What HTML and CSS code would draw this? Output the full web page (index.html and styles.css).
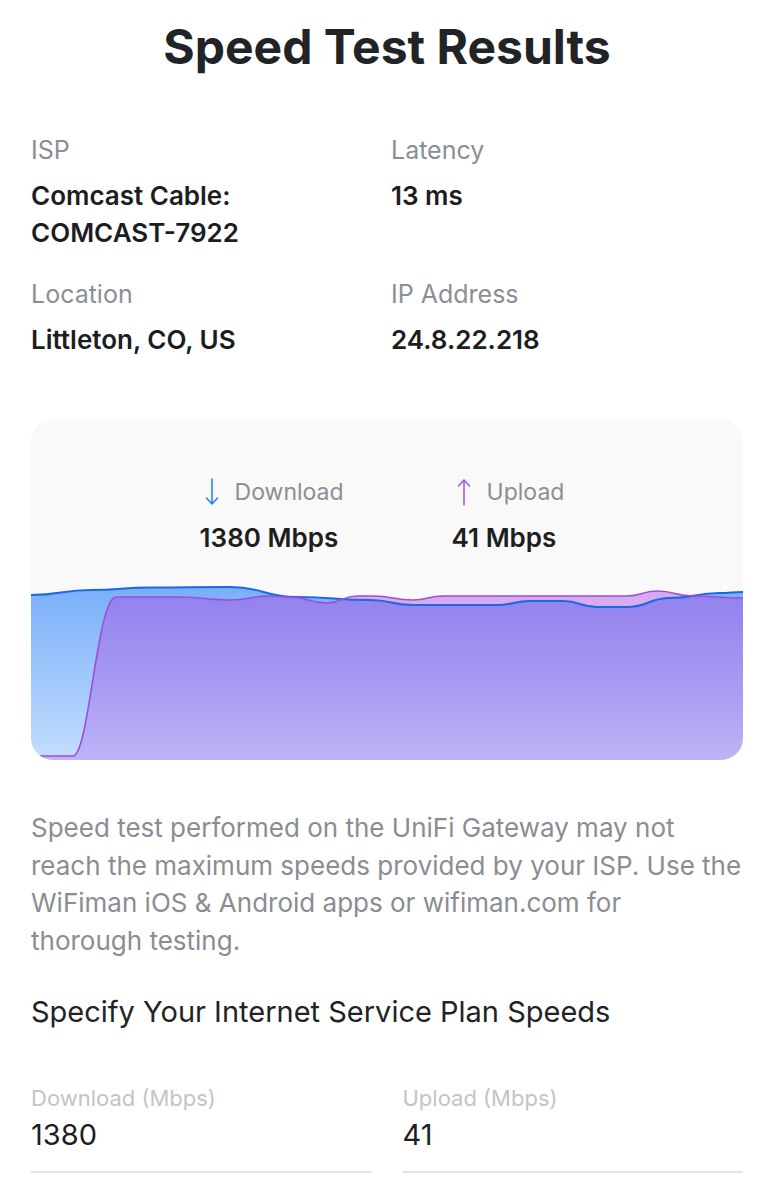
FILE: index.html
```html
<!DOCTYPE html>
<html lang="en">
<head>
    <meta charset="UTF-8">
    <meta name="viewport" content="width=device-width, initial-scale=1.0">
    <title>Speed Test Results</title>
    <link rel="stylesheet" href="styles.css">
</head>
<body>
    <div class="page">
        <h1 class="page-title">Speed Test Results</h1>

        <div class="info-grid">
            <div class="info-item">
                <div class="info-label">ISP</div>
                <div class="info-value">Comcast Cable:<br>COMCAST-7922</div>
            </div>
            <div class="info-item">
                <div class="info-label">Latency</div>
                <div class="info-value">13 ms</div>
            </div>
            <div class="info-item">
                <div class="info-label">Location</div>
                <div class="info-value">Littleton, CO, US</div>
            </div>
            <div class="info-item">
                <div class="info-label">IP Address</div>
                <div class="info-value">24.8.22.218</div>
            </div>
        </div>

        <div class="result-card">
            <div class="speed-stats">
                <div class="speed-stat">
                    <div class="speed-label">
                        <svg class="speed-arrow download" width="14" height="28" viewBox="0 0 14 28">
                            <path d="M7 1 V26 M1.5 20 L7 26 L12.5 20" fill="none" stroke="currentColor" stroke-width="1.6" stroke-linecap="round" stroke-linejoin="round"/>
                        </svg>
                        <span>Download</span>
                    </div>
                    <div class="speed-value">1380 Mbps</div>
                </div>
                <div class="speed-stat">
                    <div class="speed-label">
                        <svg class="speed-arrow upload" width="14" height="28" viewBox="0 0 14 28">
                            <path d="M7 27 V2 M1.5 8 L7 2 L12.5 8" fill="none" stroke="currentColor" stroke-width="1.6" stroke-linecap="round" stroke-linejoin="round"/>
                        </svg>
                        <span>Upload</span>
                    </div>
                    <div class="speed-value">41 Mbps</div>
                </div>
            </div>

            <svg class="speed-chart" viewBox="0 0 712 175" preserveAspectRatio="none">
                <defs>
                    <linearGradient id="downFill" x1="0" y1="0" x2="0" y2="1">
                        <stop offset="0" stop-color="#79aff9"/>
                        <stop offset="1" stop-color="#c4defe"/>
                    </linearGradient>
                    <linearGradient id="upFill" x1="0" y1="0" x2="0" y2="1">
                        <stop offset="0" stop-color="#af47e1" stop-opacity="0.45"/>
                        <stop offset="1" stop-color="#af47e1" stop-opacity="0.28"/>
                    </linearGradient>
                </defs>
                <!-- download -->
                <path fill="url(#downFill)" d="M0,10 C30,10 30,5 60,5 C90,5 90,2.5 120,2.5 C160,2.5 160,2 199,2 C232.5,2 232.5,12 266,12 C302.5,12 302.5,15 339,15 C360.5,15 360.5,20 382,20 C424,20 424,20 466,20 C482.5,20 482.5,16 499,16 C515.5,16 515.5,16 532,16 C549,16 549,22 566,22 C581,22 581,22 596,22 C617.5,22 617.5,13 639,13 C664,13 664,8 689,8 C700.5,8 700.5,7 712,7 L712,175 L0,175 Z"/>
                <!-- upload -->
                <path fill="url(#upFill)" d="M0,171 L42,171 C58,171 66,12 85,12 C117,12 117,12 149,12 C174,12 174,15 199,15 C219,15 219,11 239,11 C249,11 249,12 259,12 C277.5,12 277.5,18 296,18 C311,18 311,11 326,11 C334,11 334,11 342,11 C362,11 362,15 382,15 C397,15 397,11 412,11 C504,11 504,11 596,11 C611,11 611,6 626,6 C644,6 644,11 662,11 C687,11 687,13 712,13 L712,175 L0,175 Z"/>
                <path class="line-down" d="M0,10 C30,10 30,5 60,5 C90,5 90,2.5 120,2.5 C160,2.5 160,2 199,2 C232.5,2 232.5,12 266,12 C302.5,12 302.5,15 339,15 C360.5,15 360.5,20 382,20 C424,20 424,20 466,20 C482.5,20 482.5,16 499,16 C515.5,16 515.5,16 532,16 C549,16 549,22 566,22 C581,22 581,22 596,22 C617.5,22 617.5,13 639,13 C664,13 664,8 689,8 C700.5,8 700.5,7 712,7"/>
                <path class="line-up" d="M0,171 L42,171 C58,171 66,12 85,12 C117,12 117,12 149,12 C174,12 174,15 199,15 C219,15 219,11 239,11 C249,11 249,12 259,12 C277.5,12 277.5,18 296,18 C311,18 311,11 326,11 C334,11 334,11 342,11 C362,11 362,15 382,15 C397,15 397,11 412,11 C504,11 504,11 596,11 C611,11 611,6 626,6 C644,6 644,11 662,11 C687,11 687,13 712,13"/>
            </svg>
        </div>

        <p class="disclaimer">Speed test performed on the UniFi Gateway may not reach the maximum speeds provided by your ISP. Use the WiFiman iOS &amp; Android apps or wifiman.com for thorough&nbsp;testing.</p>

        <h2 class="section-title">Specify Your Internet Service Plan Speeds</h2>

        <div class="plan-grid">
            <div class="plan-field">
                <label for="plan-down">Download (Mbps)</label>
                <input type="text" id="plan-down" value="1380">
            </div>
            <div class="plan-field">
                <label for="plan-up">Upload (Mbps)</label>
                <input type="text" id="plan-up" value="41">
            </div>
        </div>
    </div>
</body>
</html>
```

FILE: styles.css
```css
* {
    box-sizing: border-box;
    font-family: 'Inter', 'Noto Sans', sans-serif;
}

body {
    margin: 0;
    padding: 0;
    background: white;
    color: #1d1e21;
}

.page {
    padding: 17px 31px 0;
}

.page-title {
    margin: 0;
    text-align: center;
    font-size: 48px;
    line-height: 60px;
    font-weight: 700;
    color: #222326;
}

.info-grid {
    display: grid;
    grid-template-columns: 360px 1fr;
    row-gap: 25px;
    margin-top: 55px;
}

.info-label {
    font-size: 25px;
    line-height: 36px;
    color: #8b8f95;
}

.info-value {
    margin-top: 9px;
    font-size: 26px;
    line-height: 37px;
    font-weight: 600;
    color: #1c1d1f;
}

.result-card {
    margin-top: 61px;
    background: #f9f9fa;
    border-radius: 22px;
    overflow: hidden;
    padding-top: 58px;
}

.speed-stats {
    display: flex;
    justify-content: center;
    gap: 108px;
    margin-bottom: 32px;
    padding-right: 10px;
}

.speed-label {
    display: flex;
    align-items: center;
    gap: 16px;
    height: 30px;
    padding-left: 5px;
    font-size: 23px;
    color: #8b8e94;
}

.speed-arrow.download {
    color: #2f80ef;
}

.speed-arrow.upload {
    color: #a45ae2;
}

.speed-value {
    margin-top: 16px;
    font-size: 26px;
    line-height: 30px;
    font-weight: 600;
    color: #1d1e20;
}

.speed-chart {
    display: block;
    width: 100%;
    height: 175px;
}

.line-down {
    fill: none;
    stroke: #1a68e2;
    stroke-width: 2;
}

.line-up {
    fill: none;
    stroke: #9a4fdc;
    stroke-width: 1.6;
}

.disclaimer {
    margin: 49px 0 0;
    font-size: 26px;
    line-height: 37.5px;
    color: #8a8d93;
}

.section-title {
    margin: 33px 0 0;
    font-size: 29px;
    line-height: 40px;
    font-weight: 400;
    color: #222326;
}

.plan-grid {
    display: grid;
    grid-template-columns: 1fr 1fr;
    column-gap: 31px;
    margin-top: 51px;
}

.plan-field label {
    display: block;
    font-size: 22px;
    line-height: 30px;
    color: #c2c4c8;
}

.plan-field input {
    display: block;
    width: 100%;
    margin-top: 4px;
    padding: 0 0 18px;
    border: none;
    border-bottom: 2px solid #e3e4e6;
    background: none;
    font-size: 29px;
    line-height: 36px;
    color: #1d1e21;
    outline: none;
}
```
